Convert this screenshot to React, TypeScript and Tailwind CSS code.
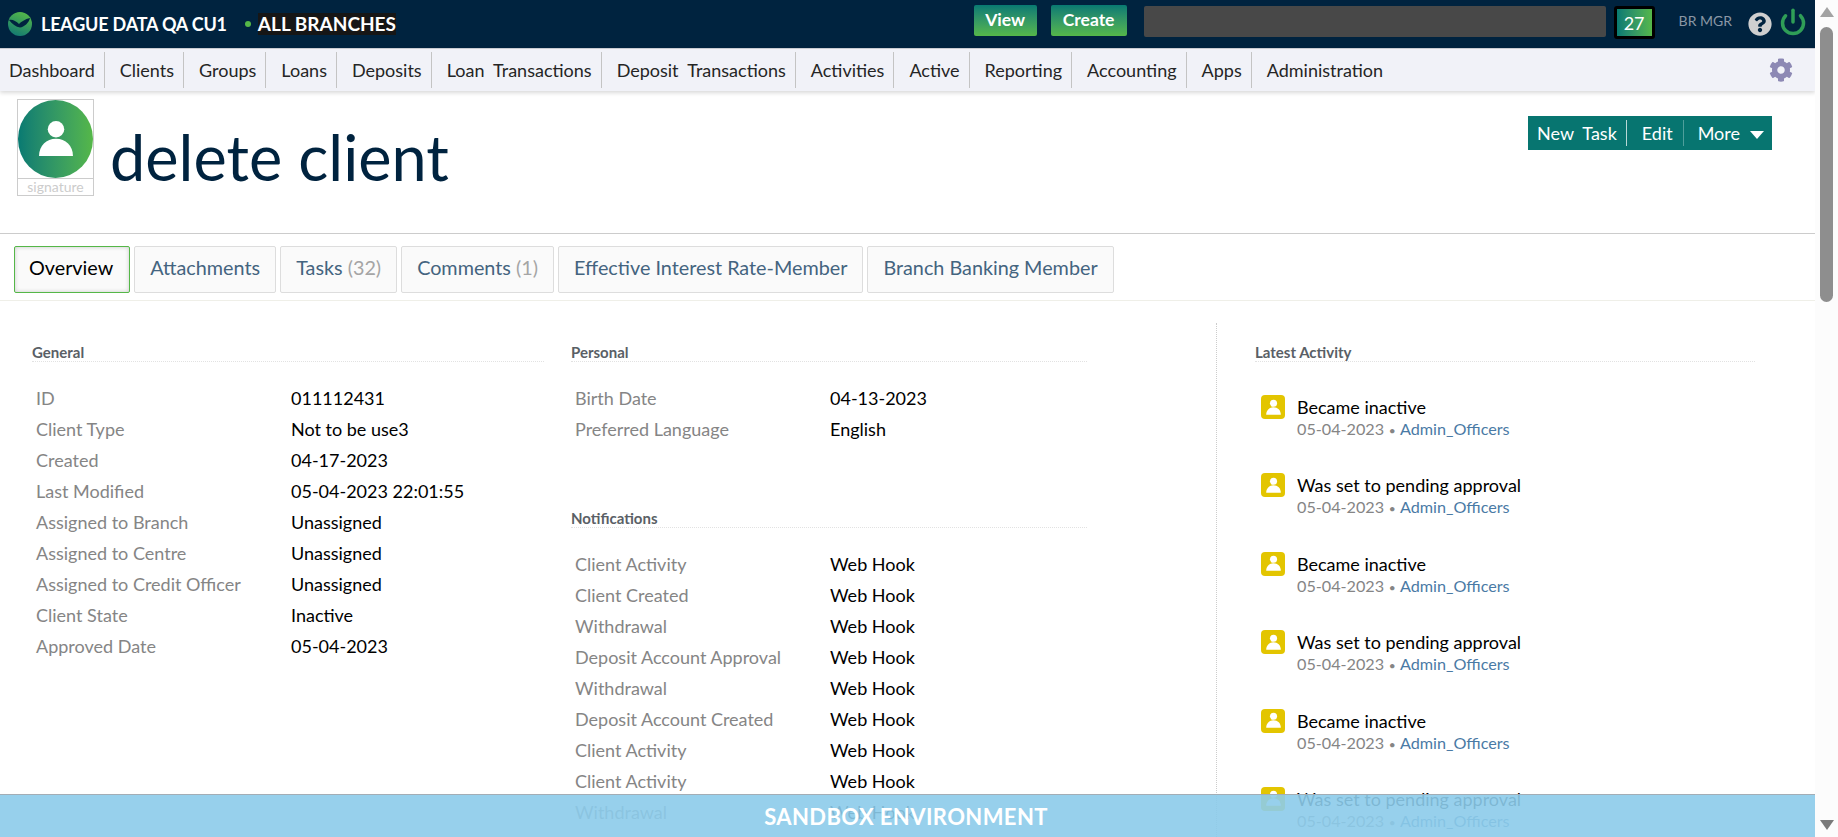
import React from 'react';
import { FaCog, FaQuestionCircle } from 'react-icons/fa';
import { Power } from 'lucide-react';

const navItems = ['Dashboard', 'Clients', 'Groups', 'Loans', 'Deposits', 'Loan  Transactions', 'Deposit  Transactions', 'Activities', 'Active', 'Reporting', 'Accounting', 'Apps', 'Administration'];

const general = [
  ['ID', '011112431'],
  ['Client Type', 'Not to be use3'],
  ['Created', '04-17-2023'],
  ['Last Modified', '05-04-2023 22:01:55'],
  ['Assigned to Branch', 'Unassigned'],
  ['Assigned to Centre', 'Unassigned'],
  ['Assigned to Credit Officer', 'Unassigned'],
  ['Client State', 'Inactive'],
  ['Approved Date', '05-04-2023'],
];

const personal = [
  ['Birth Date', '04-13-2023'],
  ['Preferred Language', 'English'],
];

const notifications = ['Client Activity', 'Client Created', 'Withdrawal', 'Deposit Account Approval', 'Withdrawal', 'Deposit Account Created', 'Client Activity', 'Client Activity', 'Withdrawal'];

const activities = ['Became inactive', 'Was set to pending approval', 'Became inactive', 'Was set to pending approval', 'Became inactive', 'Was set to pending approval'];

function Person({ className }: { className: string }) {
  return (
    <svg viewBox="0 0 24 24" className={className} fill="currentColor">
      <circle cx="12" cy="6.7" r="4.5" />
      <path d="M2.75 21.3c0-5.8 4-9.5 9.25-9.5s9.25 3.7 9.25 9.5z" />
    </svg>
  );
}

function Heading({ title }: { title: string }) {
  return <div className="border-b border-dotted border-[#e2e2e2] text-[15px] leading-[18px] font-bold text-[#5a5f66]">{title}</div>;
}

function Rows({ rows }: { rows: string[][] }) {
  return (
    <div className="pl-[4px]">
      {rows.map(([label, value], i) => (
        <div key={i} className="flex h-[31px] items-center text-[18px]">
          <div className="w-[255px] shrink-0 text-[#858585]">{label}</div>
          <div className="text-black">{value}</div>
        </div>
      ))}
    </div>
  );
}

function App() {
  return (
    <div className="relative flex h-screen overflow-hidden bg-white font-['Lato','Open_Sans',sans-serif]">
      <div className="min-w-0 flex-1">
        {/* Top bar */}
        <div className="flex h-[48px] items-center bg-[#00233f] pr-[8px] pl-[8px] text-white">
          <svg viewBox="0 0 24 24" className="h-[24px] w-[24px] shrink-0">
            <defs>
              <linearGradient id="logo" x1="0.7" y1="0" x2="0.3" y2="1">
                <stop offset="0" stopColor="#55b748" />
                <stop offset="1" stopColor="#137a72" />
              </linearGradient>
            </defs>
            <circle cx="12" cy="12" r="12" fill="url(#logo)" />
            <path d="M1 8C4 7 8 9 11 12 13 10 17 7 22 6 21 11 16 15 12 15.5 8 15 4 12 1 8z" fill="#00233f" />
          </svg>
          <span className="ml-[9px] text-[18px] font-bold tracking-[-0.2px]">LEAGUE DATA QA CU1</span>
          <span className="ml-[18px] h-[6px] w-[6px] rounded-full bg-[#55b748]" />
          <span className="ml-[7px] bg-[#161616] text-[19px] leading-[22px] font-bold">ALL BRANCHES</span>
          <button className="mb-[7px] ml-auto h-[31px] w-[63px] rounded-[2px] bg-gradient-to-b from-[#077a72] to-[#55b748] text-[17.5px] font-bold">View</button>
          <button className="mb-[7px] ml-[14px] h-[31px] w-[76px] rounded-[2px] bg-gradient-to-b from-[#077a72] to-[#55b748] text-[17.5px] font-bold">Create</button>
          <div className="mb-[5px] ml-[17px] h-[31px] w-[462px] rounded-[2px] bg-[#484848]" />
          <div className="mb-[3px] ml-[8px] flex h-[33px] w-[41px] items-center justify-center rounded-[3px] border-[3px] border-black bg-gradient-to-r from-[#077a72] to-[#55b748] pt-[2px] text-[18px]">27</div>
          <span className="mb-[8px] ml-[24px] text-[14px] text-[#8a97a5]">BR MGR</span>
          <FaQuestionCircle className="ml-[16px] h-[24px] w-[24px] text-[#cfcfcf]" />
          <Power className="mb-[5px] ml-[7px] h-[28px] w-[28px] text-[#2f9e57]" strokeWidth={3} />
        </div>

        {/* Menu */}
        <div className="relative flex h-[43px] items-center border-t border-[#c9cbd2] bg-[#f1f2f8] shadow-[0_2px_4px_rgba(0,0,0,0.15)]">
          {navItems.map((item, i) => (
            <div key={item} className={`flex h-[36px] items-center pr-[9px] pl-[15px] text-[18px] whitespace-pre text-[#252525] first:pl-[9px] ${i < navItems.length - 1 ? 'border-r border-[#c4c4c4]' : ''}`}>
              {item}
            </div>
          ))}
          <FaCog className="mr-[22px] ml-auto h-[24px] w-[24px] text-[#8d89b4]" />
        </div>

        {/* Client title */}
        <div className="flex h-[143px] items-start border-b border-[#cccccc] pt-[8px] pr-[43px] pl-[17px]">
          <div className="w-[77px] shrink-0 border border-[#cccccc] bg-white">
            <div className="flex h-[78px] items-center justify-center rounded-[50%] bg-gradient-to-r from-[#077a72] to-[#55b748] text-white">
              <Person className="h-[44px] w-[44px]" />
            </div>
            <div className="h-[17px] border-t border-[#cccccc] text-center text-[14px] leading-[16px] text-[#cccccc]">signature</div>
          </div>
          <h1 className="mt-[20px] ml-[16px] text-[63px] leading-[76px] font-normal text-[#00233f]">delete client</h1>
          <div className="mt-[17px] ml-auto flex h-[34px] items-center bg-[#077570] text-[18px] text-white">
            <span className="flex h-[26px] items-center border-r border-[#b8d8d6] pr-[9px] pl-[9px] whitespace-pre">New  Task</span>
            <span className="flex h-[26px] items-center border-r border-[#4f9f9b] pr-[10px] pl-[15px]">Edit</span>
            <span className="flex items-center pr-[8px] pl-[14px]">More<span className="mt-[3px] ml-[10px] border-x-[7px] border-t-[8px] border-x-transparent border-t-white" /></span>
          </div>
        </div>

        {/* Tabs */}
        <div className="flex h-[67px] items-start gap-[4px] border-b border-[#efefe8] pt-[12px] pl-[14px] text-[19.8px]">
          <div className="flex h-[47px] items-center rounded-[2px] border border-[#55b748] bg-[#fafafa] pr-[16px] pb-[4px] pl-[14px] text-black shadow-[inset_0_0_4px_rgba(0,0,0,0.2)]">Overview</div>
          {[['Attachments', ''], ['Tasks', ' (32)'], ['Comments', ' (1)'], ['Effective Interest Rate-Member', ''], ['Branch Banking Member', '']].map(([name, count]) => (
            <div key={name} className="flex h-[47px] items-center rounded-[2px] border border-[#dddddd] bg-[#fafafa] px-[15px] pb-[4px] whitespace-pre text-[#44647f]">
              {name}<span className="text-[#a5a5a5]">{count}</span>
            </div>
          ))}
        </div>

        {/* Details */}
        <div className="flex pt-[22px] pl-[32px]">
          <div className="w-[512px] pt-[20px]">
            <Heading title="General" />
            <div className="mt-[21px]">
              <Rows rows={general} />
            </div>
          </div>
          <div className="ml-[27px] w-[516px] pt-[20px]">
            <Heading title="Personal" />
            <div className="mt-[21px]">
              <Rows rows={personal} />
            </div>
            <div className="mt-[64px]">
              <Heading title="Notifications" />
            </div>
            <div className="mt-[21px]">
              <Rows rows={notifications.map((n) => [n, 'Web Hook'])} />
            </div>
          </div>
          <div className="ml-[129px] w-[540px] border-l border-dotted border-[#cccccc] pt-[20px] pl-[38px]">
            <div className="w-[500px]">
              <Heading title="Latest Activity" />
            </div>
            <div className="mt-[33px] pl-[6px]">
              {activities.map((a, i) => (
                <div key={i} className="flex h-[78.4px] items-start">
                  <div className="flex h-[24px] w-[24px] shrink-0 items-center justify-center rounded-[4px] bg-[#e3c500] text-white">
                    <Person className="h-[19px] w-[19px]" />
                  </div>
                  <div className="ml-[12px]">
                    <div className="text-[18px] leading-[24px] text-black">{a}</div>
                    <div className="text-[16.2px] leading-[20px] text-[#858585]">
                      05-04-2023 <span className="mx-[0.5px] text-[12px]">•</span> <span className="text-[#4a7aa5]">Admin_Officers</span>
                    </div>
                  </div>
                </div>
              ))}
            </div>
          </div>
        </div>
      </div>

      {/* Scrollbar */}
      <div className="relative z-10 flex w-[23px] shrink-0 flex-col items-center bg-[#fcfcfc]">
        <div className="mt-[7px] border-x-[7px] border-b-[10px] border-x-transparent border-b-[#a3a3a3]" />
        <div className="mt-[10px] h-[275px] w-[13px] rounded-[7px] bg-[#8e8e8e]" />
        <div className="mt-auto mb-[7px] border-x-[7px] border-t-[10px] border-x-transparent border-t-[#7a7a7a]" />
      </div>

      {/* Sandbox banner */}
      <div className="absolute right-[23px] bottom-0 left-0 flex h-[43px] items-center justify-center border-t border-[#a3adb5] bg-[#8ccbea]/90 pr-[3px] text-[22px] font-bold tracking-[0.4px] text-white">
        SANDBOX ENVIRONMENT
      </div>
    </div>
  );
}

export default App;
